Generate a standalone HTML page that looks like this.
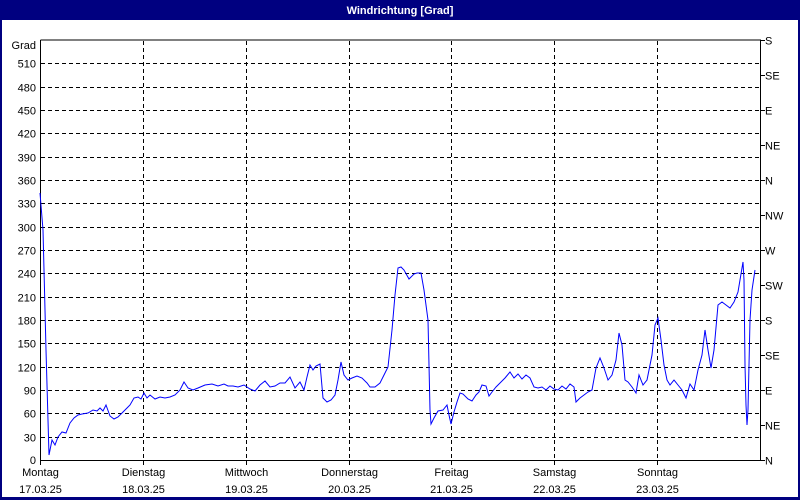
<!DOCTYPE html>
<html><head><meta charset="utf-8"><style>
body{margin:0;width:800px;height:500px;overflow:hidden;background:#fff;font-family:"Liberation Sans",sans-serif}
</style></head><body>
<svg width="800" height="500" xmlns="http://www.w3.org/2000/svg" style="position:absolute;left:0;top:0" font-family="Liberation Sans, sans-serif" font-size="11">
<rect x="0" y="0" width="800" height="500" fill="#000080"/>
<rect x="2" y="20" width="796" height="477" fill="#fff"/>
<text x="400" y="14" fill="#fff" font-weight="bold" text-anchor="middle" font-size="11">Windrichtung [Grad]</text>
<g stroke="#000" stroke-dasharray="4,3" stroke-width="1">
<path id="h" d=""/>
</g>
<g id="grid" stroke="#000" stroke-width="1" stroke-dasharray="4,3" fill="none"></g>
<path d="M40.5 40V460.5H760.5V40H40.5" fill="none" stroke="#000"/>
<g id="lab" fill="#000"></g>
<polyline fill="none" stroke="#0000ff" stroke-width="1" points="40,193 43,230 46,350 49,455 52,440 55,445 58,437 62,432 66,433 70,423 74,418 78,415 82,414 88,413 93,410 97,411 100,408 103,411 106,405 110,416 114,419 118,417 122,413 126,409 130,405 134,398 138,397 141,399 144,393 147,398 150,395 155,399 160,397 165,398 170,397 175,395 180,390 184,382 188,388 193,390 198,388 205,385 212,384 218,386 224,384 228,386 233,386 238,387 244,385 250,389 255,391 260,385 265,381 270,387 275,386 280,383 285,383 290,377 295,388 300,382 304,390 307,377 310,365 313,370 316,366 320,364 323,398 327,402 331,400 335,395 338,380 341,362 344,375 348,380 352,378 357,376 362,378 367,383 370,387 375,387 380,383 385,373 388,367 392,330 395,295 398,268 401,267 404,270 409,279 414,274 417,273 421,273 424,290 428,320 430,410 431,424 434,418 438,411 443,410 447,405 449,415 451,424 452,420 454,412 457,402 460,393 463,394 468,399 472,401 476,395 479,392 482,385 486,386 489,396 492,392 496,387 500,383 505,378 510,372 514,378 518,374 522,379 526,375 530,378 534,387 538,388 542,387 546,390 550,386 554,389 558,390 562,386 566,389 570,384 574,387 576,402 580,398 584,395 588,392 592,390 596,368 600,358 604,368 608,380 612,375 616,360 619,333 622,345 625,380 628,382 632,387 636,393 639,375 643,385 647,380 652,355 655,325 658,318 661,340 664,365 667,380 670,385 674,380 678,385 682,390 686,398 690,384 694,390 698,370 702,355 705,330 708,350 711,368 714,350 718,305 722,302 726,305 730,308 734,302 738,292 743,262 744,280 745,365 746,405 747,425 748,410 750,320 752,290 755,270"/>
</svg>
<script>
var ns="http://www.w3.org/2000/svg",g=document.getElementById('grid'),l=document.getElementById('lab');
function el(p,t,a,txt){var e=document.createElementNS(ns,t);for(var k in a)e.setAttribute(k,a[k]);if(txt)e.textContent=txt;p.appendChild(e);}
for(var v=30;v<=510;v+=30){var y=Math.round(460-v*420/540)+0.5;el(g,'line',{x1:41,x2:760,y1:y,y2:y});el(l,'text',{x:36,y:y+4,'text-anchor':'end'},v);}
el(l,'text',{x:36,y:49,'text-anchor':'end'},'Grad');el(l,'text',{x:36,y:464,'text-anchor':'end'},'0');
var days=['Montag','Dienstag','Mittwoch','Donnerstag','Freitag','Samstag','Sonntag'];
for(var i=0;i<7;i++){var x=Math.round(40+i*720/7)+0.5;if(i>0){el(g,'line',{x1:x,x2:x,y1:41,y2:460});}
el(l,'line',{x1:x,x2:x,y1:460,y2:465,stroke:'#000'});
el(l,'text',{x:x,y:476,'text-anchor':'middle'},days[i]);el(l,'text',{x:x,y:493,'text-anchor':'middle'},(17+i)+'.03.25');}
var d=['S','SE','E','NE','N','NW','W','SW','S','SE','E','NE','N'];
for(var j=0;j<13;j++){var y=40+j*35+0.5;el(l,'line',{x1:760,x2:765,y1:y,y2:y,stroke:'#000'});el(l,'text',{x:765,y:y+4},d[j]);}
</script>
</body></html>
